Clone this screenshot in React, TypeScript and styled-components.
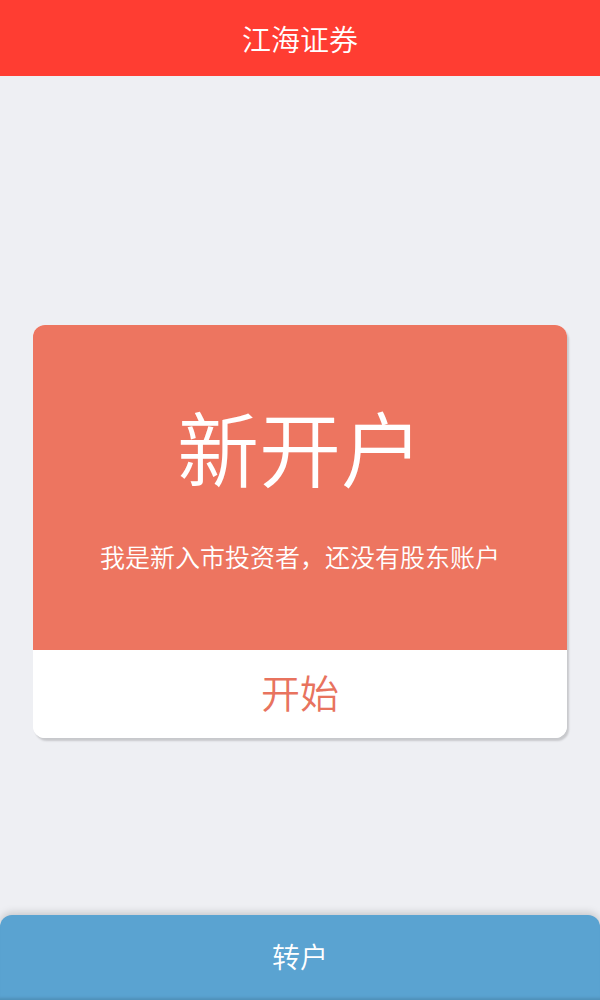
import styled, { createGlobalStyle } from "styled-components";

const GlobalStyle = createGlobalStyle`
  html, body {
    margin: 0;
    padding: 0;
    background: #eeeff3;
    font-family: "Noto Sans CJK SC", "Noto Sans", sans-serif;
  }
  * {
    box-sizing: border-box;
  }
`;

const Page = styled.div`
  display: flex;
  flex-direction: column;
  width: 100%;
  height: 1000px;
  overflow: hidden;
  background: #eeeff3;
`;

const Header = styled.header`
  height: 76px;
  flex-shrink: 0;
  display: flex;
  align-items: center;
  justify-content: center;
  background: #ff3d32;
  color: #ffffff;
  font-size: 29px;
  font-weight: 350;
  line-height: 1;
`;

const Main = styled.main`
  flex: 1;
  padding-top: 249px;
`;

const Card = styled.div`
  width: 534px;
  margin: 0 auto;
  border-radius: 12px;
  overflow: hidden;
  background: #ffffff;
  box-shadow: 2px 3px 2px rgba(0, 0, 0, 0.16);
`;

const CardTop = styled.div`
  height: 325px;
  display: flex;
  flex-direction: column;
  align-items: center;
  padding-top: 80px;
  background: #ed7560;
  color: #ffffff;
`;

const CardTitle = styled.h1`
  margin: 0;
  font-size: 82px;
  font-weight: 350;
  line-height: 1;
`;

const CardText = styled.p`
  margin: 57px 0 0;
  font-size: 25px;
  font-weight: 350;
  line-height: 1;
`;

const StartButton = styled.button`
  display: flex;
  align-items: center;
  justify-content: center;
  width: 100%;
  height: 88px;
  border: none;
  background: #ffffff;
  color: #e8735e;
  font-family: inherit;
  font-size: 39px;
  font-weight: 350;
  line-height: 1;
  padding: 0 0 6px;
  cursor: pointer;
`;

const TransferButton = styled.button`
  height: 85px;
  flex-shrink: 0;
  width: 100%;
  border: none;
  border-radius: 12px 12px 0 0;
  background: #5aa3d1;
  color: #ffffff;
  font-family: inherit;
  font-size: 28px;
  font-weight: 350;
  line-height: 1;
  padding: 0 0 4px;
  box-shadow: 0 -2px 8px rgba(0, 0, 0, 0.18), inset 0 -4px 3px -2px rgba(0, 0, 0, 0.12);
  cursor: pointer;
`;

export default function App() {
  return (
    <>
      <GlobalStyle />
      <Page>
        <Header>江海证券</Header>
        <Main>
          <Card>
            <CardTop>
              <CardTitle>新开户</CardTitle>
              <CardText>我是新入市投资者，还没有股东账户</CardText>
            </CardTop>
            <StartButton>开始</StartButton>
          </Card>
        </Main>
        <TransferButton>转户</TransferButton>
      </Page>
    </>
  );
}
